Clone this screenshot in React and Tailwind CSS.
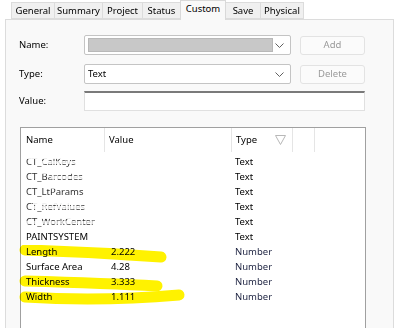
import React from 'react';

const tabs = [
  { label: 'General', w: 'w-[44px]' },
  { label: 'Summary', w: 'w-[49px]' },
  { label: 'Project', w: 'w-[41px]' },
  { label: 'Status', w: 'w-[39px]' },
  { label: 'Custom', w: 'w-[46px]' },
  { label: 'Save', w: 'w-[36px]' },
  { label: 'Physical', w: 'w-[44px]' },
];

const rows = [
  { name: 'CT_CalKeys', value: '', type: 'Text' },
  { name: 'CT_Barcodes', value: '', type: 'Text' },
  { name: 'CT_LtParams', value: '', type: 'Text' },
  { name: 'CT_RefValues', value: '', type: 'Text' },
  { name: 'CT_WorkCenter', value: '', type: 'Text' },
  { name: 'PAINTSYSTEM', value: '', type: 'Text' },
  { name: 'Length', value: '2.222', type: 'Number' },
  { name: 'Surface Area', value: '4.28', type: 'Number' },
  { name: 'Thickness', value: '3.333', type: 'Number' },
  { name: 'Width', value: '1.111', type: 'Number' },
];

const Chevron = () => (
  <svg width="9" height="5" viewBox="0 0 9 5" className="text-[#606060]">
    <path d="M0.5 0.5 L4.5 4.5 L8.5 0.5" fill="none" stroke="currentColor" strokeWidth="1" />
  </svg>
);

const Combo = ({ children }) => (
  <div className="w-[207px] h-[20px] bg-white border border-[#c4c4c4] rounded-[2px] flex items-center pl-[3px] pr-[6px]">
    <div className="flex-1 h-full flex items-center">{children}</div>
    <Chevron />
  </div>
);

const Button = ({ children }) => (
  <div className="w-[65px] h-[19px] border border-[#e3e3e3] bg-[#fbfbfb] rounded-[3px] flex items-center justify-center text-[#9a9a9a]">
    {children}
  </div>
);

export default function App() {
  return (
    <div className="w-[400px] h-[328px] bg-white overflow-hidden text-[9.5px] text-black" style={{ fontFamily: '"Noto Sans", "Open Sans", sans-serif' }}>
      {/* tabs */}
      <div className="flex pl-[12px] h-[19px] items-end">
        {tabs.map((t) =>
          t.label === 'Custom' ? (
            <div key={t.label} className={`${t.w} h-[20px] -mb-px -ml-px bg-[#f9f9f9] border border-b-0 border-[#d9d9d9] flex justify-center pt-[2px] relative z-10 leading-[12px]`}>
              {t.label}
            </div>
          ) : (
            <div key={t.label} className={`${t.w} h-[17px] bg-[#f0f0f0] border border-[#dcdcdc] -ml-px flex items-center justify-center leading-[12px]`}>
              {t.label}
            </div>
          )
        )}
      </div>

      {/* panel */}
      <div className="ml-[5px] w-[389px] h-[320px] bg-[#f9f9f9] border border-[#dcdcdc] pt-[15px] pl-[13px] relative">
        <div className="flex items-center h-[20px]">
          <div className="w-[65px]">Name:</div>
          <Combo>
            <div className="w-[185px] h-[14px] bg-[#c8c8c8] border border-[#b8b8b8]" />
          </Combo>
          <div className="ml-[9px]">
            <Button>Add</Button>
          </div>
        </div>

        <div className="flex items-center h-[20px] mt-[9px]">
          <div className="w-[65px]">Type:</div>
          <Combo>
            <span>Text</span>
          </Combo>
          <div className="ml-[9px]">
            <Button>Delete</Button>
          </div>
        </div>

        <div className="flex items-center h-[20px] mt-[7px]">
          <div className="w-[65px]">Value:</div>
          <div className="w-[281px] h-[20px] bg-white border border-[#e0e0e0] border-t-[#7a7a7a] border-t-2" />
        </div>

        {/* list */}
        <div className="mt-[16px] ml-[1px] w-[346px] h-[210px] bg-white border border-[#a0a0a0] border-b-0 relative">
          <div className="flex h-[24px] items-center">
            <div className="w-[84px] pl-[5px] h-full flex items-center border-r border-[#e5e5e5]">Name</div>
            <div className="w-[126px] pl-[4px] h-full flex items-center">Value</div>
            <div className="w-[62px] pl-[4px] h-full flex items-center justify-between pr-[6px] border-l border-r border-[#e5e5e5]">
              <span>Type</span>
              <svg width="11" height="10" viewBox="0 0 11 10">
                <path d="M0.5 0.5 L10.5 0.5 L5.5 9.5 Z" fill="none" stroke="#b8b8b8" strokeWidth="1" />
              </svg>
            </div>
            <div className="w-[22px] h-full border-r border-[#e5e5e5]" />
          </div>
          <div className="pt-[2px]">
            {rows.map((r, i) => (
              <div key={r.name} className="flex h-[15px] items-center leading-[15px]">
                <div className={`w-[89px] pl-[5px] ${i < 5 ? 'text-[#333]' : ''}`}>{r.name}</div>
                <div className="w-[125px] pl-[1px]">{r.value}</div>
                <div className={r.type === 'Number' ? 'text-[#1c2240]' : ''}>{r.type}</div>
              </div>
            ))}
          </div>

          {/* erased bits */}
          <div className="absolute left-[0px] top-[28px] w-[90px] h-[3px] bg-white/90" />
          <div className="absolute left-[20px] top-[33px] w-[70px] h-[3px] bg-white/80" />
          <div className="absolute left-[18px] top-[43px] w-[72px] h-[3px] bg-white/80" />
          <div className="absolute left-[30px] top-[48px] w-[60px] h-[3px] bg-white/80" />
          <div className="absolute left-[28px] top-[58px] w-[40px] h-[3px] bg-white/70" />
          <div className="absolute left-[12px] top-[72px] w-[80px] h-[5px] bg-white/90" />
          <div className="absolute left-[8px] top-[78px] w-[80px] h-[3px] bg-white/80" />
          <div className="absolute left-[20px] top-[87px] w-[70px] h-[4px] bg-white/90" />
          <div className="absolute left-[5px] top-[93px] w-[80px] h-[3px] bg-white/70" />
          <div className="absolute left-[5px] top-[102px] w-[80px] h-[3px] bg-white/70" />
        </div>

        {/* highlighter */}
        <svg className="absolute left-[-5px] top-[225px] mix-blend-multiply pointer-events-none" width="200" height="70" viewBox="0 0 200 70">
          <path d="M24 5 C60 6 120 9 160 12" stroke="#fff200" strokeWidth="11" strokeLinecap="round" fill="none" />
          <path d="M24 36 C60 37 120 39 156 41" stroke="#fff200" strokeWidth="11" strokeLinecap="round" fill="none" />
          <path d="M24 52 C70 55 120 55 178 50" stroke="#fff200" strokeWidth="11" strokeLinecap="round" fill="none" />
        </svg>
      </div>
    </div>
  );
}
